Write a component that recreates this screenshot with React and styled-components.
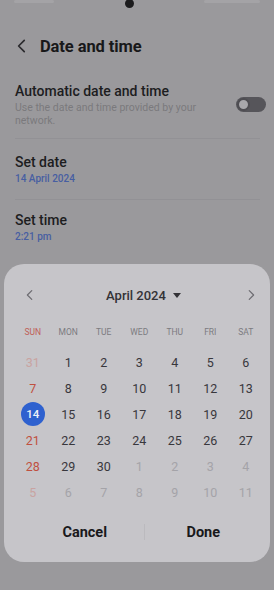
import styled, { createGlobalStyle } from 'styled-components'

const GlobalStyle = createGlobalStyle`
  html, body {
    margin: 0;
    padding: 0;
    background: #9a999c;
    font-family: Roboto, "Noto Sans", "Liberation Sans", sans-serif;
  }
  * { box-sizing: border-box; }
`

const Screen = styled.div`
  position: relative;
  width: 274px;
  height: 590px;
  overflow: hidden;
  display: flex;
  flex-direction: column;
  background: #9a999c;
`

const StatusBar = styled.div`
  height: 14px;
  display: flex;
  align-items: flex-start;
  justify-content: space-between;
  padding: 0 14px;
`

const StatusFaint = styled.div`
  width: ${(p) => p.$w}px;
  height: 3px;
  border-radius: 2px;
  background: #a4a3a6;
`

const Camera = styled.div`
  width: 9px;
  height: 9px;
  border-radius: 50%;
  background: #1c1c1e;
  margin-top: -1px;
`

const Header = styled.div`
  height: 60px;
  display: flex;
  align-items: center;
  gap: 9px;
  padding: 4px 0 0 13px;
`

const Title = styled.h1`
  margin: 0;
  font-size: 16.5px;
  font-weight: 700;
  color: #18181a;
  letter-spacing: -0.1px;
`

const List = styled.div`
  display: flex;
  flex-direction: column;
  padding: 0 6px;
`

const Row = styled.div`
  display: flex;
  align-items: center;
  justify-content: space-between;
  padding: ${(p) => p.$pad};
  margin: 0 8px 0 9px;
  border-bottom: ${(p) => (p.$divider ? '1px solid #929195' : 'none')};
`

const RowText = styled.div`
  display: flex;
  flex-direction: column;
  gap: 1px;
`

const RowTitle = styled.div`
  font-size: 14px;
  font-weight: 500;
  color: #1d1d1f;
  line-height: 18px;
`

const RowSub = styled.div`
  font-size: 10.5px;
  line-height: 13px;
  color: #7a797d;
  width: 205px;
`

const RowValue = styled.div`
  font-size: 10px;
  line-height: 14px;
  font-weight: 500;
  color: #475ea2;
`

const Toggle = styled.div`
  width: 30px;
  height: 15px;
  border-radius: 8px;
  background: #56555a;
  display: flex;
  align-items: center;
  padding: 0 1px;
  margin-right: -6px;
`

const Knob = styled.div`
  width: 13px;
  height: 13px;
  border-radius: 50%;
  background: #a8a7ab;
  border: 2px solid #4e4d52;
`

const Dialog = styled.div`
  position: absolute;
  left: 4px;
  right: 4px;
  top: 264px;
  height: 298px;
  border-radius: 20px;
  background: #c6c5c9;
  display: flex;
  flex-direction: column;
  padding: 16px 6px 0 11px;
`

const MonthBar = styled.div`
  display: flex;
  align-items: center;
  justify-content: space-between;
  height: 30px;
  padding: 0 6px 0 8px;
`

const MonthLabel = styled.div`
  display: flex;
  align-items: center;
  gap: 7px;
  font-size: 13px;
  font-weight: 500;
  color: #333236;
  margin-left: 6px;
`

const Caret = styled.span`
  width: 0;
  height: 0;
  border-left: 4px solid transparent;
  border-right: 4px solid transparent;
  border-top: 5px solid #333236;
`

const Grid = styled.div`
  display: grid;
  grid-template-columns: repeat(7, 35.5px);
  grid-template-rows: 30px repeat(6, 26px);
  margin-top: 9px;
`

const WeekDay = styled.div`
  display: flex;
  align-items: center;
  justify-content: center;
  align-self: start;
  font-size: 8.5px;
  color: ${(p) => (p.$sun ? '#bf5f58' : '#7c7b80')};
  height: 26px;
`

const Day = styled.div`
  display: flex;
  align-items: center;
  justify-content: center;
  font-size: 12.5px;
  color: ${(p) => p.$color};
`

const Selected = styled.span`
  width: 24px;
  height: 24px;
  border-radius: 50%;
  background: #2e61cf;
  color: #eef1f8;
  display: flex;
  align-items: center;
  justify-content: center;
  font-size: 11.5px;
  font-weight: 500;
`

const Actions = styled.div`
  display: flex;
  align-items: center;
  margin: 12px 2px 0 11px;
  height: 30px;
`

const Action = styled.div`
  flex: 1;
  text-align: center;
  font-size: 14.5px;
  font-weight: 700;
  color: #19191b;
`

const ActionDivider = styled.div`
  width: 1px;
  height: 16px;
  background: #bbbabe;
`

function Chevron({ dir, size = 16, color = '#6d6c71', stroke = 1.4 }) {
  const d = dir === 'left' ? 'M10 3 L5 8 L10 13' : 'M6 3 L11 8 L6 13'
  return (
    <svg width={size} height={size} viewBox="0 0 16 16" fill="none">
      <path d={d} stroke={color} strokeWidth={stroke} strokeLinecap="round" strokeLinejoin="round" />
    </svg>
  )
}

const weekDays = ['SUN', 'MON', 'TUE', 'WED', 'THU', 'FRI', 'SAT']

function buildDays() {
  const days = [{ n: 31, kind: 'prev' }]
  for (let i = 1; i <= 30; i++) days.push({ n: i, kind: 'cur' })
  for (let i = 1; i <= 11; i++) days.push({ n: i, kind: 'next' })
  return days
}

function dayColor(kind, index) {
  const sunday = index % 7 === 0
  if (kind === 'cur') return sunday ? '#c0503f' : '#38373c'
  return sunday ? '#c9a3a1' : '#a4a3a8'
}

export default function App() {
  const days = buildDays()
  return (
    <Screen>
      <GlobalStyle />
      <StatusBar>
        <StatusFaint $w={40} />
        <Camera />
        <StatusFaint $w={56} />
      </StatusBar>
      <Header>
        <Chevron dir="left" size={18} color="#2a2a2d" stroke={1.5} />
        <Title>Date and time</Title>
      </Header>
      <List>
        <Row $divider $pad="8px 0 11px">
          <RowText>
            <RowTitle>Automatic date and time</RowTitle>
            <RowSub>Use the date and time provided by your network.</RowSub>
          </RowText>
          <Toggle>
            <Knob />
          </Toggle>
        </Row>
        <Row $divider $pad="14px 0 13px">
          <RowText>
            <RowTitle>Set date</RowTitle>
            <RowValue>14 April 2024</RowValue>
          </RowText>
        </Row>
        <Row $pad="11px 0">
          <RowText>
            <RowTitle>Set time</RowTitle>
            <RowValue>2:21 pm</RowValue>
          </RowText>
        </Row>
      </List>

      <Dialog>
        <MonthBar>
          <Chevron dir="left" size={14} />
          <MonthLabel>
            April 2024
            <Caret />
          </MonthLabel>
          <Chevron dir="right" size={14} />
        </MonthBar>
        <Grid>
          {weekDays.map((w) => (
            <WeekDay key={w} $sun={w === 'SUN'}>
              {w}
            </WeekDay>
          ))}
          {days.map((d, i) => (
            <Day key={`${d.kind}-${d.n}`} $color={dayColor(d.kind, i)}>
              {d.kind === 'cur' && d.n === 14 ? <Selected>14</Selected> : d.n}
            </Day>
          ))}
        </Grid>
        <Actions>
          <Action>Cancel</Action>
          <ActionDivider />
          <Action>Done</Action>
        </Actions>
      </Dialog>
    </Screen>
  )
}
